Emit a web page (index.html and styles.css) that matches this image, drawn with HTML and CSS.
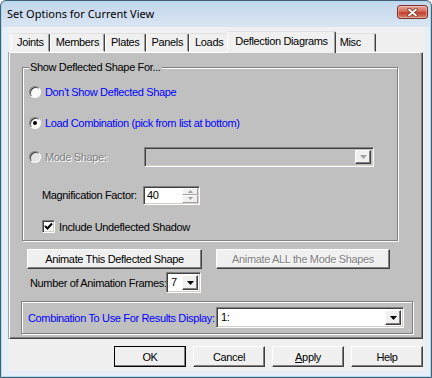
FILE: index.html
```html
<!DOCTYPE html>
<html lang="en">
<head>
  <meta charset="UTF-8" />
  <title>Set Options for Current View</title>
  <link rel="stylesheet" href="styles.css">
</head>
<body>
  <div class="window">
    <div class="titlebar">
      <span class="title">Set Options for Current View</span>
      <div class="close-btn">
        <svg width="11" height="9" viewBox="0 0 11 9">
          <path d="M2 1.5 L9 7.5 M9 1.5 L2 7.5" stroke="#7a3128" stroke-width="3.4" stroke-linecap="round"/>
          <path d="M2 1.5 L9 7.5 M9 1.5 L2 7.5" stroke="#fff" stroke-width="1.8" stroke-linecap="round"/>
        </svg>
      </div>
    </div>

    <div class="client">
      <div class="tabs">
        <div class="tab">Joints</div>
        <div class="tab">Members</div>
        <div class="tab">Plates</div>
        <div class="tab">Panels</div>
        <div class="tab">Loads</div>
        <div class="tab active">Deflection Diagrams</div>
        <div class="tab misc">Misc</div>
      </div>

      <div class="panel">
        <fieldset class="group">
          <legend>Show Deflected Shape For...</legend>
          <div class="opt-row row-1">
            <span class="radio"></span>
            <span class="blue">Don't Show Deflected Shape</span>
          </div>
          <div class="opt-row row-2">
            <span class="radio checked"></span>
            <span class="blue">Load Combination (pick from list at bottom)</span>
          </div>
          <div class="opt-row row-3">
            <span class="radio disabled"></span>
            <span class="mode-label disabled-text">Mode Shape:</span>
            <div class="combo disabled mode-combo">
              <div class="combo-text"></div>
              <div class="drop-btn"><svg width="7" height="4" viewBox="0 0 7 4"><path d="M0 0h7L3.5 4z" fill="#a0a0a0"/></svg></div>
            </div>
          </div>
          <div class="mag-row">
            <span class="mag-label">Magnification Factor:</span>
            <div class="spin">
              <span class="spin-text">40</span>
              <div class="spin-btns">
                <div class="spin-btn"><svg width="5" height="3" viewBox="0 0 5 3"><path d="M0 3h5L2.5 0z" fill="#a0a0a0"/></svg></div>
                <div class="spin-btn"><svg width="5" height="3" viewBox="0 0 5 3"><path d="M0 0h5L2.5 3z" fill="#a0a0a0"/></svg></div>
              </div>
            </div>
          </div>
          <div class="check-row">
            <span class="checkbox">
              <svg width="9" height="9" viewBox="0 0 9 9"><path d="M1 4 L3.5 6.5 L8 1.5" stroke="#000" stroke-width="2" fill="none"/></svg>
            </span>
            <span>Include Undeflected Shadow</span>
          </div>
        </fieldset>

        <div class="animate-row">
          <div class="btn animate-one">Animate This Deflected Shape</div>
          <div class="btn animate-all disabled-text">Animate ALL the Mode Shapes</div>
        </div>

        <div class="frames-row">
          <span class="frames-label">Number of Animation Frames:</span>
          <div class="combo frames-combo">
            <div class="combo-text">7</div>
            <div class="drop-btn"><svg width="7" height="4" viewBox="0 0 7 4"><path d="M0 0h7L3.5 4z" fill="#000"/></svg></div>
          </div>
        </div>

        <div class="result-box">
          <span class="blue">Combination To Use For Results Display:</span>
          <div class="combo result-combo">
            <div class="combo-text">1:</div>
            <div class="drop-btn"><svg width="7" height="4" viewBox="0 0 7 4"><path d="M0 0h7L3.5 4z" fill="#000"/></svg></div>
          </div>
        </div>
      </div>

      <div class="dialog-buttons">
        <div class="btn default">OK</div>
        <div class="btn">Cancel</div>
        <div class="btn"><u>A</u>pply</div>
        <div class="btn">Help</div>
      </div>
    </div>
  </div>
</body>
</html>
```

FILE: styles.css
```css
* {
  box-sizing: border-box;
}
html, body {
  margin: 0;
  padding: 0;
  background: #fff;
}
body {
  font-family: "Liberation Sans", Arial, sans-serif;
  font-size: 11px;
  letter-spacing: -0.35px;
  color: #000;
  white-space: nowrap;
}

.window {
  width: 432px;
  height: 378px;
  border: 1px solid #4a5b72;
  border-radius: 6px 6px 0 0;
  background: linear-gradient(#c3d6ec, #d9e5f2 26px, #e6eef7 26px);
  box-shadow: inset 0 0 0 1px #a9dcee;
  display: flex;
  flex-direction: column;
  overflow: hidden;
}

.titlebar {
  height: 26px;
  display: flex;
  align-items: flex-start;
  padding: 0 3px 0 6px;
}
.title {
  font-family: "Noto Sans", sans-serif;
  font-size: 11px;
  letter-spacing: 0;
  line-height: 16px;
  margin-top: 5px;
  color: #000;
}
.close-btn {
  margin-left: auto;
  margin-top: 4px;
  width: 31px;
  height: 14px;
  border: 1px solid #7c3127;
  border-radius: 3px;
  background: linear-gradient(#e6a69c, #d46a5a 45%, #c2412f 55%, #d7826f);
  box-shadow: inset 0 0 0 1px rgba(255, 255, 255, 0.35);
  display: flex;
  align-items: center;
  justify-content: center;
}

.client {
  flex: 1;
  margin: 0 6px 6px 7px;
  background: #f0f0f0;
  padding: 4px 2px 0 1px;
}

.tabs {
  display: flex;
  align-items: flex-end;
  height: 21px;
  padding-left: 2px;
}
.tab {
  height: 19px;
  line-height: 17px;
  padding: 0 5px;
  background: #f0f0f0;
  border: 1px solid;
  border-color: #e0e0e0 #404040 transparent #ffffff;
  border-radius: 2px 2px 0 0;
  box-shadow: inset -1px 0 #a0a0a0;
}
.tab.active {
  height: 22px;
  line-height: 18px;
  margin: 0 -2px -1px -2px;
  padding: 0 7px;
  position: relative;
  z-index: 1;
  border-bottom: none;
}
.tab.misc {
  padding-right: 14px;
}

.panel {
  height: 287px;
  background: #c0c0c0;
  border: 1px solid;
  border-color: #ffffff #404040 #404040 #ffffff;
  box-shadow: inset -1px -1px #808080, -1px 0 #a0a0a0;
  padding: 8px 0 0 12px;
}

.blue {
  color: #0000ff;
}
.disabled-text {
  color: #808080;
  text-shadow: 1px 1px #fff;
}

.group {
  margin: 0;
  width: 376px;
  padding: 0 6px 7px 6px;
  border: 1px solid #808080;
  box-shadow: inset 1px 1px #fff, 1px 1px #fff;
}
.group legend {
  padding: 0 1px;
  line-height: 13px;
  background: #c0c0c0;
  position: relative;
}

.opt-row {
  height: 20px;
  display: flex;
  align-items: center;
  gap: 4px;
}
.row-1 { margin-top: 8px; }
.row-2 { margin-top: 11px; }
.row-3 { margin-top: 14px; }

.radio {
  width: 12px;
  height: 12px;
  border-radius: 50%;
  background: #fff;
  border: 1px solid;
  border-color: #808080 #ffffff #ffffff #808080;
  box-shadow: inset 1px 1px #404040;
  position: relative;
  flex: none;
}
.radio.checked::after {
  content: "";
  position: absolute;
  left: 3px;
  top: 3px;
  width: 4px;
  height: 4px;
  border-radius: 50%;
  background: #000;
}
.radio.disabled {
  background: #e4e4e4;
}
.mode-label {
  flex: none;
  width: 95px;
}

.combo {
  display: flex;
  background: #fff;
  border: 1px solid;
  border-color: #808080 #ffffff #ffffff #808080;
  box-shadow: inset 1px 1px #404040, inset -1px -1px #d4d0c8;
  padding: 2px;
}
.combo.disabled {
  background: #c0c0c0;
}
.combo-text {
  flex: 1;
  line-height: 15px;
  padding-left: 2px;
}
.drop-btn {
  width: 16px;
  background: #f0f0f0;
  border: 1px solid;
  border-color: #ffffff #404040 #404040 #ffffff;
  box-shadow: inset -1px -1px #808080;
  display: flex;
  align-items: center;
  justify-content: center;
}
.mode-combo {
  width: 230px;
  height: 20px;
}

.mag-row {
  margin-top: 18px;
  height: 20px;
  display: flex;
  align-items: center;
  padding-left: 13px;
}
.mag-label {
  flex: none;
  width: 101px;
}
.spin {
  width: 57px;
  height: 19px;
  display: flex;
  background: #fff;
  border: 1px solid;
  border-color: #808080 #ffffff #ffffff #808080;
  box-shadow: inset 1px 1px #404040, inset -1px -1px #d4d0c8;
  padding: 1px 1px 1px 2px;
}
.spin-text {
  flex: 1;
  line-height: 15px;
  padding-left: 1px;
}
.spin-btns {
  width: 16px;
  display: flex;
  flex-direction: column;
}
.spin-btn {
  flex: 1;
  background: #f0f0f0;
  border: 1px solid;
  border-color: #ffffff #a0a0a0 #a0a0a0 #ffffff;
  display: flex;
  align-items: center;
  justify-content: center;
}

.check-row {
  margin-top: 15px;
  height: 13px;
  display: flex;
  align-items: center;
  gap: 4px;
  padding-left: 13px;
}
.checkbox {
  width: 13px;
  height: 13px;
  background: #fff;
  border: 1px solid;
  border-color: #808080 #ffffff #ffffff #808080;
  box-shadow: inset 1px 1px #404040, inset -1px -1px #d4d0c8;
  display: flex;
  align-items: center;
  justify-content: center;
}

.btn {
  height: 20px;
  background: #f0f0f0;
  border: 1px solid;
  border-color: #ffffff #404040 #404040 #ffffff;
  box-shadow: inset -1px -1px #808080;
  display: flex;
  align-items: center;
  justify-content: center;
}

.animate-row {
  margin-top: 8px;
  display: flex;
  gap: 14px;
  padding-left: 5px;
}
.animate-one {
  width: 175px;
}
.animate-all {
  width: 174px;
}

.frames-row {
  margin-top: 3px;
  height: 21px;
  display: flex;
  align-items: center;
  padding-left: 8px;
}
.frames-label {
  flex: none;
  width: 136px;
}
.frames-combo {
  width: 35px;
  height: 21px;
}

.result-box {
  margin: 8px 0 0 -1px;
  width: 392px;
  height: 33px;
  border: 1px solid #808080;
  box-shadow: inset 1px 1px #fff, 1px 1px #fff;
  display: flex;
  align-items: center;
  padding-left: 6px;
}
.result-combo {
  margin-left: auto;
  margin-right: 8px;
  width: 188px;
  height: 21px;
}

.dialog-buttons {
  margin-top: 7px;
  display: flex;
  justify-content: flex-end;
  gap: 7px;
}
.dialog-buttons .btn {
  width: 72px;
  height: 21px;
}
.dialog-buttons .btn.default {
  outline: 1px solid #000;
  outline-offset: -1px;
}
```
